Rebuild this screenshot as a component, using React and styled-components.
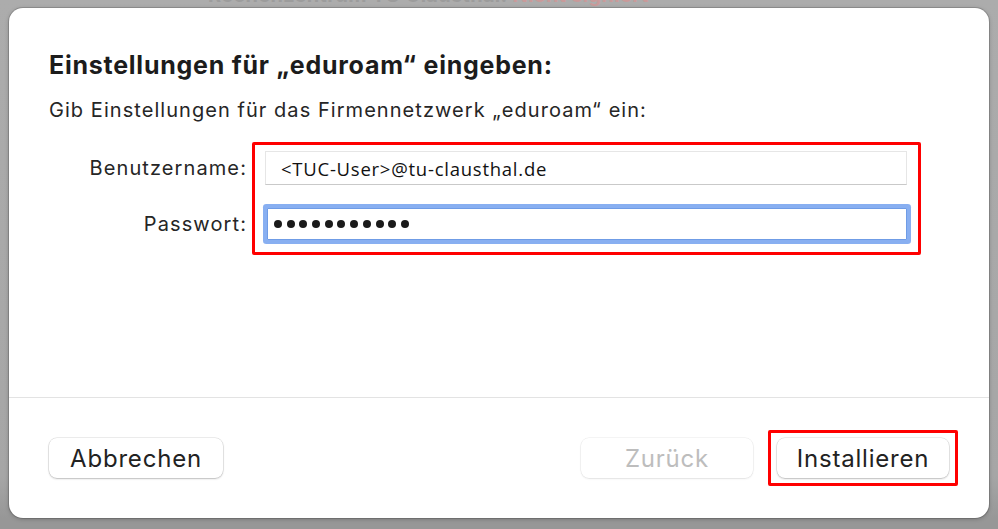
import React from "react"
import styled, { createGlobalStyle } from "styled-components"

const GlobalStyle = createGlobalStyle`
  html, body {
    margin: 0;
    padding: 0;
    background: #a9a9a9;
    overflow: hidden;
  }
  * {
    box-sizing: border-box;
  }
`

const Screen = styled.div`
  width: 998px;
  height: 529px;
  display: flex;
  flex-direction: column;
  background: linear-gradient(#acacac, #a6a6a6 90%, #979797 98%);
  font-family: Inter, "Noto Sans", sans-serif;
  overflow: hidden;
`

const BackdropStrip = styled.div`
  height: ${({ h }) => h}px;
  flex: 0 0 auto;
  overflow: hidden;
  padding-left: ${({ left }) => left}px;
  white-space: nowrap;
`

const BackdropText = styled.div`
  margin-top: ${({ shift }) => shift}px;
  font-size: 20px;
  font-weight: 700;
  line-height: 24px;
  letter-spacing: 0.3px;
`

const Faint = styled.span`
  color: ${({ red }) => (red ? "#c99a9a" : "#9c9c9c")};
`

const Dialog = styled.div`
  margin: 0 9px;
  width: 980px;
  height: 510px;
  flex: 0 0 auto;
  background: #ffffff;
  border-radius: 14px;
  box-shadow: 0 0 0 1px rgba(0, 0, 0, 0.14), 0 1px 4px rgba(0, 0, 0, 0.25);
  display: flex;
  flex-direction: column;
  overflow: hidden;
`

const Content = styled.div`
  height: 389px;
  padding: 43px 40px 0 40px;
`

const Title = styled.h1`
  margin: 0;
  font-size: 25px;
  line-height: 29px;
  font-weight: 700;
  color: #1c1c1c;
  letter-spacing: 0.75px;
`

const Subtitle = styled.p`
  margin: 18px 0 0 0;
  font-size: 20px;
  line-height: 24px;
  color: #262626;
  letter-spacing: 1.05px;
`

const Form = styled.div`
  margin-top: 20px;
  display: flex;
  align-items: flex-start;
  gap: 5px;
`

const Labels = styled.div`
  width: 198px;
  padding-top: 9px;
  display: flex;
  flex-direction: column;
  gap: 23px;
`

const Label = styled.div`
  height: ${({ h }) => h}px;
  line-height: ${({ h }) => h}px;
  text-align: right;
  font-size: 20px;
  letter-spacing: 1.1px;
  color: #262626;
`

const Highlight = styled.div`
  border: 3px solid #ff0000;
  border-radius: 2px;
  padding: ${({ pad }) => pad};
  margin-left: ${({ offset }) => offset || 0}px;
  display: flex;
  flex-direction: column;
  gap: ${({ gap }) => gap || 0}px;
`

const Field = styled.div`
  width: 642px;
  height: ${({ h }) => h}px;
  display: flex;
  align-items: center;
  padding-left: 15px;
  background: #fff;
  border: 1px solid #e6e6e6;
  border-bottom-color: #c9c9c9;
  font-family: "Open Sans", "Noto Sans", sans-serif;
  font-size: 18.5px;
  letter-spacing: 0.75px;
  color: #111;
  ${({ focused }) =>
    focused &&
    `
    width: 640px;
    margin-left: 2px;
    padding-left: 6px;
    border: 1px solid #6f9ce6;
    border-radius: 1px;
    box-shadow: 0 0 0 4px #88aff1;
  `}
`

const Dots = styled.div`
  display: flex;
  gap: 4.7px;
`

const Dot = styled.span`
  width: 8px;
  height: 8px;
  border-radius: 50%;
  background: #1a1a1a;
`

const Footer = styled.div`
  flex: 1;
  border-top: 1px solid #e3e3e3;
  display: flex;
  align-items: center;
  padding: 0 31px 0 40px;
`

const Spacer = styled.div`
  flex: 1;
`

const Button = styled.button`
  width: ${({ w }) => w}px;
  height: 40px;
  border: none;
  border-radius: 8px;
  background: #fff;
  box-shadow: 0 0 0 0.5px rgba(0, 0, 0, 0.14), 0 1px 2px rgba(0, 0, 0, 0.2);
  font-family: Inter, "Noto Sans", sans-serif;
  font-size: 24px;
  letter-spacing: 0.8px;
  color: ${({ disabled }) => (disabled ? "#bdbdbd" : "#222")};
  padding: 0;
  ${({ disabled }) =>
    disabled &&
    `box-shadow: 0 0 0 0.5px rgba(0, 0, 0, 0.08), 0 1px 2px rgba(0, 0, 0, 0.08);`}
`

export default function App() {
  return (
    <>
      <GlobalStyle />
      <Screen>
        <BackdropStrip h={8} left={208}>
          <BackdropText shift={-17}>
            <Faint>Rechenzentrum TU Clausthal: </Faint>
            <Faint red>Nicht signiert</Faint>
          </BackdropText>
        </BackdropStrip>
        <Dialog>
          <Content>
            <Title>Einstellungen für „eduroam“ eingeben:</Title>
            <Subtitle>
              Gib Einstellungen für das Firmennetzwerk „eduroam“ ein:
            </Subtitle>
            <Form>
              <Labels>
                <Label h={34}>Benutzername:</Label>
                <Label h={32}>Passwort:</Label>
              </Labels>
              <Highlight pad="6px 11px 12px 10px" gap={23}>
                <Field h={34}>&lt;TUC-User&gt;@tu-clausthal.de</Field>
                <Field h={32} focused>
                  <Dots>
                    {Array.from({ length: 11 }).map((_, i) => (
                      <Dot key={i} />
                    ))}
                  </Dots>
                </Field>
              </Highlight>
            </Form>
          </Content>
          <Footer>
            <Button w={174}>Abbrechen</Button>
            <Spacer />
            <Button w={172} disabled>
              Zurück
            </Button>
            <Highlight pad="5px 6px" offset={15}>
              <Button w={172}>Installieren</Button>
            </Highlight>
          </Footer>
        </Dialog>
        <BackdropStrip h={11} left={540}>
          <BackdropText shift={8}>
            <Faint>WLAN</Faint>
          </BackdropText>
        </BackdropStrip>
      </Screen>
    </>
  )
}
